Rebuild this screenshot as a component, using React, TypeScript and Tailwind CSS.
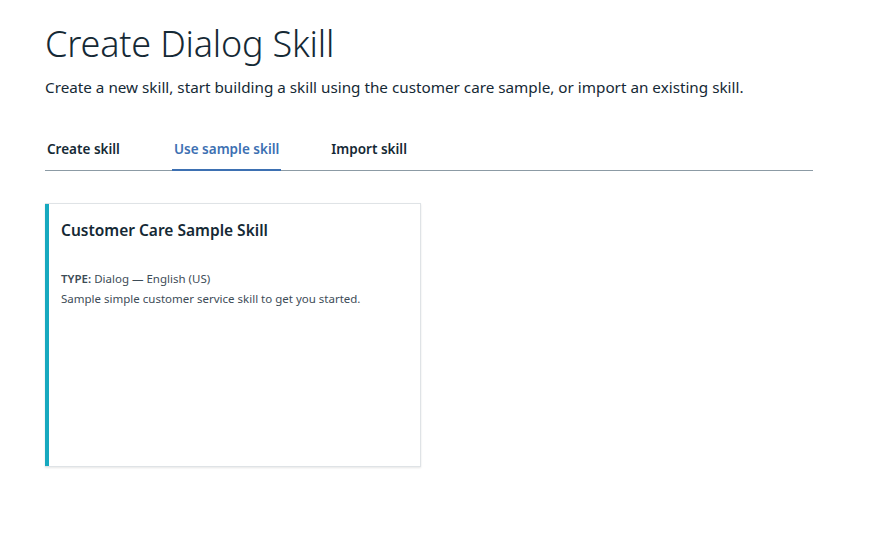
export default function App() {
  const tabs = ['Create skill', 'Use sample skill', 'Import skill'];
  const active = 1;

  return (
    <div className="min-h-screen bg-white pl-[45px] pt-[22px] font-['Noto_Sans',sans-serif] text-[#152935]">
      <h1 className="text-[36px] font-light leading-[44px] tracking-[-0.2px]">Create Dialog Skill</h1>
      <p className="mt-[10px] text-[15.25px] leading-[22px]">
        Create a new skill, start building a skill using the customer care sample, or import an existing skill.
      </p>

      {/* Tabs */}
      <div className="mt-[41px] flex w-[768px] border-b border-[#8c9ba5]">
        {tabs.map((t, i) => (
          <button
            key={t}
            className={
              i === active
                ? 'mr-[48px] -mb-px border-b-2 border-[#3d70b2] px-[2px] pb-[10px] text-[13.5px] font-semibold text-[#3d70b2]'
                : i === 0
                  ? 'mr-[50px] px-[2px] pb-[11px] text-[13.5px] font-semibold text-[#152935]'
                  : 'px-[2px] pb-[11px] text-[13.5px] font-semibold text-[#152935]'
            }
          >
            {t}
          </button>
        ))}
      </div>

      {/* Sample card */}
      <div className="mt-[32px] flex h-[264px] w-[376px] border border-[#dfe3e6] border-l-0 bg-white shadow-[0_1px_2px_rgba(0,0,0,0.1)]">
        <div className="w-[4px] bg-[#17a9bf]" />
        <div className="pl-[12px] pt-[15px]">
          <h2 className="text-[15.5px] font-semibold leading-[22px]">Customer Care Sample Skill</h2>
          <div className="mt-[28px] text-[11.5px] leading-[20px] text-[#3d4c57]">
            <p>
              <span className="font-semibold">TYPE:</span> Dialog — English (US)
            </p>
            <p>Sample simple customer service skill to get you started.</p>
          </div>
        </div>
      </div>
    </div>
  );
}
